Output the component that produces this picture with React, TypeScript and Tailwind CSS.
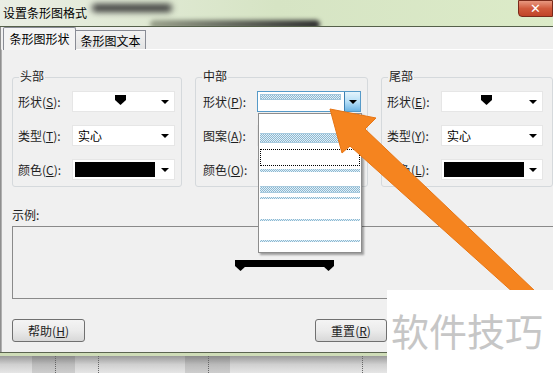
const FONT = "font-['Tahoma','Noto_Sans_CJK_SC',sans-serif]";

const Caret = () => (
  <span className="w-0 h-0 border-l-[4px] border-r-[4px] border-t-[4px] border-l-transparent border-r-transparent border-t-black" />
);

const Pent = () => (
  <svg width="11" height="10" viewBox="0 0 11 10">
    <polygon points="0,0 11,0 11,5 5.5,10 0,5" fill="#000" />
  </svg>
);

const hatch =
  "bg-[conic-gradient(#8cb9d3_25%,#e2eff6_0_50%,#8cb9d3_0_75%,#e2eff6_0)] bg-[length:2px_2px]";

function Combo({ children, w = "w-[103px]" }: { children?: React.ReactNode; w?: string }) {
  return (
    <div className={`flex items-center h-[21px] ${w} bg-white border border-[#e6e6e6] pr-[5px]`}>
      <div className="flex-1 flex items-center h-full min-w-0">{children}</div>
      <Caret />
    </div>
  );
}

function Label({ text, k }: { text: string; k: string }) {
  return (
    <span className="w-[54px] shrink-0 text-[12px] leading-[14px] text-[#1e1e1e]">
      {text}(<span className="underline">{k}</span>):
    </span>
  );
}

function Group({ title, w, pl, children }: { title: string; w: string; pl: string; children: React.ReactNode }) {
  return (
    <div className={`relative ${w} h-[110px] border border-[#d5d9dc] rounded-[3px] ${pl} pt-[13px] flex flex-col gap-[13px]`}>
      <span className="absolute -top-[9px] left-[6px] px-[1px] bg-[#f0f0f0] text-[12px] leading-[14px] text-[#1e1e1e]">
        {title}
      </span>
      {children}
    </div>
  );
}

function Row({ text, k, children }: { text: string; k: string; children: React.ReactNode }) {
  return (
    <div className="flex items-center">
      <Label text={text} k={k} />
      {children}
    </div>
  );
}

function Button({ text, k, w }: { text: string; k: string; w: string }) {
  return (
    <div className={`${w} h-[23px] flex items-center justify-center rounded-[3px] border border-[#707070] bg-gradient-to-b from-[#f4f4f4] via-[#ebebeb] to-[#d8d8d8] text-[12px] text-[#1e1e1e]`}>
      {text}(<span className="underline">{k}</span>)
    </div>
  );
}

export default function App() {
  return (
    <div className={`relative w-[553px] h-[373px] overflow-hidden bg-[#f0f0f0] ${FONT}`}>
      {/* title bar */}
      <div className="relative h-[27px] flex items-center pl-[3px] bg-gradient-to-r from-[#eaeee4] via-[#d6e4c4] to-[#dcebc8] border-b border-[#55604a] overflow-hidden">
        <div className="absolute left-[92px] top-[4px] w-[80px] h-[8px] rounded-full bg-[#3a3a3a] blur-[3px]" />
        <div className="absolute left-[150px] top-[20px] w-[170px] h-[9px] rounded-full bg-gradient-to-r from-[#9aa28c] to-[#303030] blur-[2px]" />
        <span className="relative text-[12px] leading-[14px] text-black">设置条形图格式</span>
        <div className="absolute right-0 top-0 w-[35px] h-[17px] rounded-bl-[4px] border border-[#7a2a1a] bg-gradient-to-b from-[#e89880] via-[#d05a3c] to-[#c04428] flex items-center justify-center">
          <span className="text-white font-bold text-[13px] leading-none font-['DejaVu_Sans',sans-serif]">✕</span>
        </div>
      </div>

      {/* body */}
      <div className="border-l border-[#8f8f8f] h-[325px] flex flex-col">
        {/* tabs */}
        <div className="h-[23px] flex items-end pl-[2px] shrink-0">
          <div className="relative z-10 w-[73px] h-[23px] bg-[#f4f4f4] border border-b-0 border-[#898c95] rounded-t-[2px] flex items-center justify-center text-[12px] text-black">
            条形图形状
          </div>
          <div className="w-[70px] h-[20px] bg-gradient-to-b from-[#f2f2f2] to-[#e3e3e3] border border-b-0 border-l-0 border-[#898c95] flex items-center justify-center text-[12px] text-black">
            条形图文本
          </div>
        </div>
        <div className="flex-1 border-t border-[#fff] border-l border-l-[#b0b0b0] -mt-px flex flex-col pl-[10px]">
          <div className="flex mt-[27px] gap-[13px]">
            <Group title="头部" w="w-[170px]" pl="pl-[5px]">
              <Row text="形状" k="S">
                <Combo>
                  <div className="flex-1 flex justify-center pt-[3px] self-start pl-[6px]"><Pent /></div>
                </Combo>
              </Row>
              <Row text="类型" k="T">
                <Combo><span className="pl-[5px] text-[12px] text-black">实心</span></Combo>
              </Row>
              <Row text="颜色" k="C">
                <Combo><div className="ml-[2px] w-[80px] h-[15px] bg-black" /></Combo>
              </Row>
            </Group>
            <Group title="中部" w="w-[173px]" pl="pl-[7px]">
              <Row text="形状" k="P">
                <div className="flex h-[21px] w-[104px] bg-white border border-[#569ac8]">
                  <div className="flex-1 pl-[2px] pt-[2px] pr-[2px]">
                    <div className={`h-[6px] w-[81px] border border-[#a2c6dc] ${hatch}`} />
                  </div>
                  <div className="w-[16px] h-full flex items-center justify-center border-l border-[#3c7fb1] bg-gradient-to-b from-[#e5f4fc] via-[#b6dff7] to-[#6cb4e4]">
                    <Caret />
                  </div>
                </div>
              </Row>
              <Row text="图案" k="A"><Combo w="w-[104px]" /></Row>
              <Row text="颜色" k="O"><Combo w="w-[104px]" /></Row>
            </Group>
            <Group title="尾部" w="w-[172px]" pl="pl-[5px]">
              <Row text="形状" k="E">
                <Combo w="w-[102px]">
                  <div className="flex-1 flex justify-center pt-[3px] self-start pl-[2px]"><Pent /></div>
                </Combo>
              </Row>
              <Row text="类型" k="Y">
                <Combo w="w-[102px]"><span className="pl-[5px] text-[12px] text-black">实心</span></Combo>
              </Row>
              <Row text="颜色" k="L">
                <Combo w="w-[102px]"><div className="ml-[2px] w-[80px] h-[15px] bg-black" /></Combo>
              </Row>
            </Group>
          </div>

          <span className="mt-[21px] text-[12px] leading-[14px] text-[#1e1e1e]">示例:</span>
          <div className="mt-[4px] w-[560px] h-[73px] border border-[#8a8a8a] pl-[222px] pt-[33px]">
            <svg width="99" height="12" viewBox="0 0 99 12">
              <polygon points="0,0 11,0 11,6 5.5,11 0,6" fill="#000" />
              <rect x="5" y="0" width="89" height="7" fill="#000" />
              <polygon points="88,0 99,0 99,6 93.5,11 88,6" fill="#000" />
            </svg>
          </div>

          <div className="mt-[20px] flex">
            <Button text="帮助" k="H" w="w-[73px]" />
            <div className="ml-[230px]"><Button text="重置" k="R" w="w-[72px]" /></div>
          </div>
        </div>
      </div>

      {/* dialog bottom edge + app strip */}
      <div className="h-[4px] border-t border-[#5b6450] bg-[#cfddb8]" />
      <div className="relative h-[17px] bg-gradient-to-b from-[#9a9a9a] via-[#d0d0d0] to-[#e6e6e6] flex">
        <div className="w-[32px]" />
        <div className="w-[43px] bg-black/10" />
        <div className="w-[110px]" />
        <div className="w-[45px] bg-black/10" />
        <div className="absolute left-[55px] top-0 h-full border-l border-dotted border-[#666]" />
        <div className="absolute left-[98px] top-0 h-full border-l border-dotted border-[#666]" />
        <div className="absolute left-[208px] top-0 h-full border-l border-dotted border-[#666]" />
        <div className="absolute left-[362px] top-0 h-full border-l border-dotted border-[#666]" />
      </div>

      {/* open dropdown list */}
      <div className="absolute left-[258px] top-[113px] w-[104px] h-[140px] bg-white border border-[#8d8d8d] shadow-[2px_2px_2px_rgba(0,0,0,0.35)] flex flex-col px-[1px]">
        <div className="h-[19px]" />
        <div className={`h-[10px] border-y border-[#a8cade] ${hatch}`} />
        <div className="h-[6px]" />
        <div className="h-[17px] border border-dotted border-black" />
        <div className="h-[3px]" />
        <div className={`h-[3px] ${hatch}`} />
        <div className="h-[14px]" />
        <div className={`h-[7px] border-y border-[#a8cade] ${hatch}`} />
        <div className="h-[4px]" />
        <div className={`h-[2px] ${hatch}`} />
        <div className="h-[20px]" />
        <div className={`h-[2px] ${hatch}`} />
        <div className="h-[19px]" />
        <div className={`h-[2px] ${hatch}`} />
      </div>

      {/* orange arrow */}
      <svg className="absolute left-0 top-0" width="553" height="373" viewBox="0 0 553 373">
        <polygon
          points="330,109 376,118 365,129 621,373 603,373 350,146 342,153"
          fill="#f5841f"
          stroke="#e77514"
          strokeWidth="1"
        />
      </svg>

      {/* watermark */}
      <div className="absolute left-[387px] top-[290px] w-[166px] h-[83px] bg-white flex items-center pl-[4px] pb-[4px]">
        <span className="text-[38px] leading-none text-[#c6c6c6] font-['Noto_Sans_CJK_SC',sans-serif] whitespace-nowrap">软件技巧</span>
      </div>
    </div>
  );
}
